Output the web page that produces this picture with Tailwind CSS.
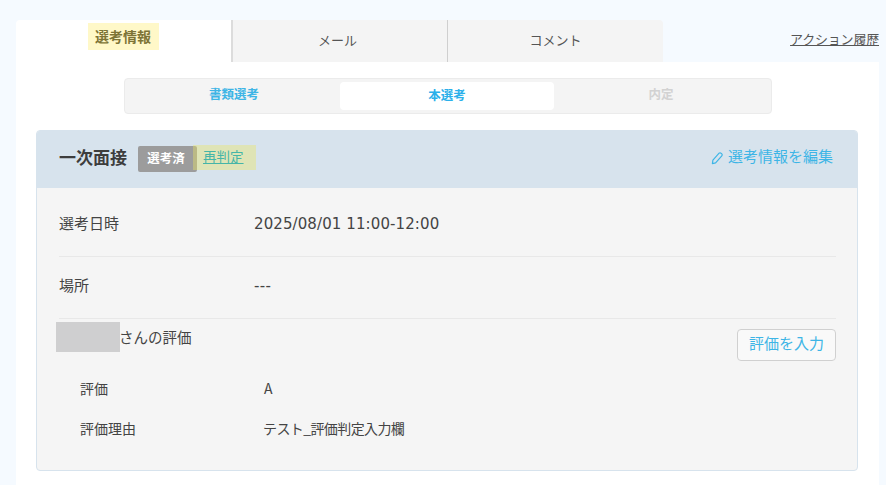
<!DOCTYPE html>
<html lang="ja">
<head>
<meta charset="utf-8">
<title>選考情報</title>
<script src="https://cdn.jsdelivr.net/npm/@tailwindcss/browser@4"></script>
</head>
<body class="bg-[#f5faff] font-['Noto_Sans_CJK_JP','Noto_Sans',sans-serif] text-[#444] overflow-hidden">
	<div class="w-[886px] h-[485px] pt-[20px] pl-[16px] pr-[7px]">
		<!-- Tabs -->
		<div class="flex h-[42px]">
			<div class="relative w-[215px] bg-white flex items-center justify-center rounded-tl">
				<span class="bg-[#fff8c8] text-[#7d7436] font-bold text-[14px] h-[27px] w-[71px] -mt-[9px] ml-[-1px] flex items-center justify-center">選考情報</span>
			</div>
			<div class="w-[216px] bg-[#f4f4f4] border-l-2 border-[#dcdcdc] flex items-center justify-center text-[13px] text-[#555] pb-[3px] pr-[5px]">メール</div>
			<div class="w-[216px] bg-[#f4f4f4] border-l border-[#cfcfcf] rounded-tr flex items-center justify-center text-[13px] text-[#555] pb-[3px]">コメント</div>
			<div class="flex-1 flex justify-end items-start pt-[9px]">
				<a class="underline text-[13px] leading-[20px] text-[#555] tracking-[-0.2px]">アクション履歴</a>
			</div>
		</div>

		<div class="bg-white h-[423px] pt-[16px] px-[20px]">
			<!-- Selection steps -->
			<div class="ml-[88px] w-[648px] h-[36px] bg-[#f4f4f4] border border-[#ebebeb] rounded flex items-center px-[3px] text-[12.5px] font-bold">
				<div class="w-[212px] text-center text-[#3db5e6] pb-[3px]">書類選考</div>
				<div class="w-[214px] h-[28px] bg-white rounded flex items-center justify-center text-[#2bb0ea] pb-px">本選考</div>
				<div class="flex-1 text-center text-[#d2d2d2] pb-[3px]">内定</div>
			</div>

			<!-- Card -->
			<div class="mt-[16px] w-[822px] h-[341px] bg-[#f5f5f5] border border-[#d7e3ed] rounded overflow-hidden">
				<div class="relative h-[58px] -mt-px bg-[#d7e3ed] flex items-center pl-[22px] pr-[24px]">
					<h2 class="text-[17px] font-bold text-[#3d3d3d] pb-[4px]">一次面接</h2>
					<span class="ml-[11px] w-[59px] h-[26px] bg-[#9c9c9c] rounded-[2px] text-white text-[12.5px] font-bold flex items-center justify-center pr-[3px] pb-[2px]">選考済</span>
					<a class="absolute left-[156px] top-[15px] w-[63px] h-[25px] bg-[#ebe664]/40 pl-[10px] text-[13.5px] leading-[23px] underline text-[#45b5a8]">再判定</a>
					<a class="ml-auto flex items-center gap-[4px] text-[15px] text-[#3db5e6] pb-[6px]">
						<svg class="w-[13px] h-[14px] mt-[3px]" viewBox="0 0 13 14" fill="none" stroke="#3db5e6" stroke-width="1.2" stroke-linejoin="round"><path d="M1.4 12.6l.5-3.4 6.2-7a1.3 1.3 0 0 1 1.9 0l.8.7a1.3 1.3 0 0 1 0 1.9l-6.2 7z"/></svg>
						選考情報を編集
					</a>
				</div>

				<div class="pl-[22px] pr-[21px]">
					<div class="h-[69px] flex items-center border-b border-[#e8e8e8] text-[15px] pt-[3px]">
						<div class="w-[195px]">選考日時</div>
						<div class="font-['DejaVu_Sans',sans-serif] text-[15px] tracking-[0.1px] pt-[2px]">2025/08/01 11:00-12:00</div>
					</div>
					<div class="h-[62px] flex items-center border-b border-[#e8e8e8] text-[15px] pb-[4px]">
						<div class="w-[195px]">場所</div>
						<div class="font-['DejaVu_Sans',sans-serif] text-[15px] tracking-[0.3px] pt-[2px]">---</div>
					</div>
					<div class="relative h-[54px] flex items-start justify-between pt-[8px]">
						<span class="absolute left-[-3px] top-[3px] w-[64px] h-[30px] bg-[#cfcfd0]"></span>
						<div class="pl-[60px] text-[14.5px] leading-[20px]">さんの評価</div>
						<button class="w-[99px] h-[32px] mt-[2px] bg-[#f9f9f9] border border-[#d0d0d0] rounded text-[15px] text-[#3db5e6] pb-[3px]">評価を入力</button>
					</div>
					<div class="pl-[21px] text-[14px] pt-[5px]">
						<div class="flex h-[20px] items-center"><div class="w-[183px]">評価</div><div class="ml-px">A</div></div>
						<div class="flex h-[20px] items-center mt-[20px]"><div class="w-[183px]">評価理由</div><div class="tracking-[-0.6px]">テスト_評価判定入力欄</div></div>
					</div>
				</div>
			</div>
		</div>
	</div>
</body>
</html>
